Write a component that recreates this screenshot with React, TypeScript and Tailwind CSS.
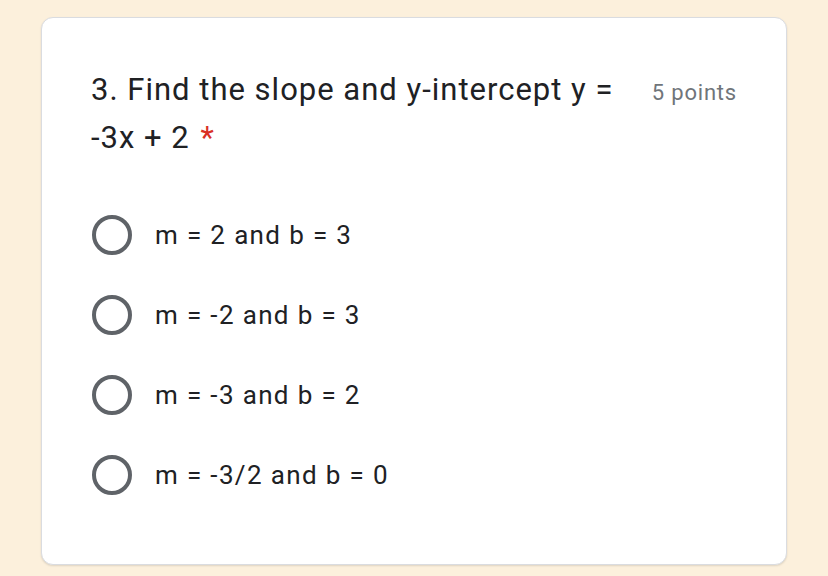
import React from "react";

const options = ["m = 2 and b = 3", "m = -2 and b = 3", "m = -3 and b = 2", "m = -3/2 and b = 0"];

export default function App() {
  return (
    <div className="w-[828px] h-[576px] bg-[#fcf0dc] pt-[17px] pl-[41px]" style={{ fontFamily: "Roboto, 'Liberation Sans', sans-serif" }}>
      <div className="w-[746px] h-[548px] bg-white rounded-[12px] border-[1.5px] border-[#dadce0] shadow-[0_1px_2px_rgba(0,0,0,0.12)] pl-[49px] pr-[49px] pt-[48px]">
        <div className="flex justify-between items-start">
          <div className="w-[540px] text-[31px] leading-[48px] text-[#202124] tracking-[1px]">
            3. Find the slope and y-intercept y = -3x + 2 <span className="text-[#d93025] ml-[2px]">*</span>
          </div>
          <div className="text-[22px] leading-[48px] text-[#70757a] tracking-[0.8px] pt-[3px]">5 points</div>
        </div>
        <div className="mt-[53px] flex flex-col gap-[40px]">
          {options.map((o) => (
            <div key={o} className="flex items-center h-[40px]">
              <div className="w-[40px] h-[40px] rounded-full border-[4px] border-[#5f6368] ml-[1px] shrink-0" />
              <div className="ml-[23px] text-[26px] text-[#202124] tracking-[1.35px]">{o}</div>
            </div>
          ))}
        </div>
      </div>
    </div>
  );
}
